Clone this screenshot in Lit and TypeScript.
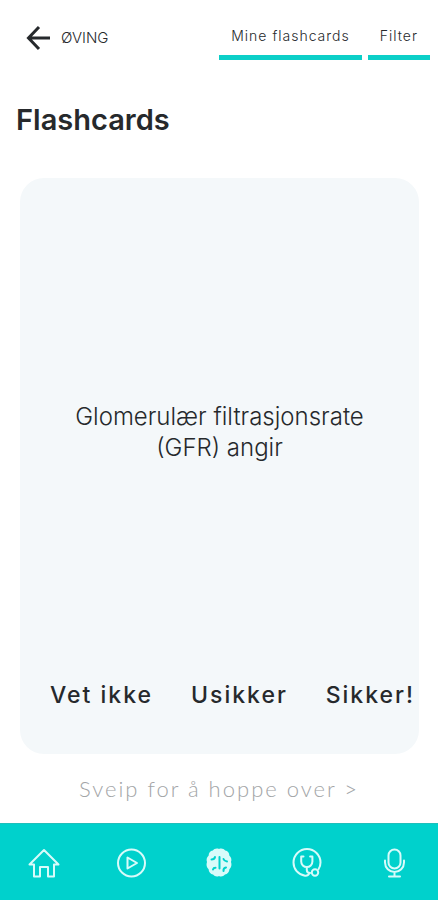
import { LitElement, html, css, svg } from "lit";
import { customElement, property } from "lit/decorators.js";

const icons: Record<string, unknown> = {
  home: svg`<path d="M1.500 17.500 16 3 30.500 17.500h-4.500v12h-6v-9.500h-8v9.500H6v-12z"/>`,
  play: svg`<circle cx="16.500" cy="16" r="13.500"/><path d="M12.500 10.500v11l9.500-5.500z"/>`,
  brain: svg`<path fill="currentColor" stroke="none" d="M16 2c2-1 5-.4 6.200 1.500 2.600.4 4.300 2.600 4.100 5 2 1.600 2.600 4.300 1.700 6.500 1 2.700.4 5.600-1.600 7.200-.1 2.700-2 5.100-4.400 5.400-1.500 1.900-4.200 2.500-6 1.400-1.800 1.100-4.500.5-6-1.400-2.400-.3-4.300-2.700-4.400-5.400-2-1.600-2.600-4.500-1.600-7.200-.9-2.200-.3-4.900 1.700-6.500-.2-2.400 1.500-4.600 4.100-5C11 1.600 14 1 16 2z"/>
    <path class="groove" d="M16.500 10v11.500M8.500 12.500c1.800 0 3.200-1 3.500-2.500M20.500 12c.5 1.500 1.700 2.300 3.500 2.500M10 22.500c.3-1.200 1.200-1.700 2.500-1.700M20.500 24c-.2-2 .8-3.200 2.500-3.500"/>`,
  stethoscope: svg`<path d="M18.500 26c-1 1.900-2.700 3-4.500 2.700C7 27.600 2.500 22 2.500 15.500A13.500 13.500 0 0 1 29.500 15.500c0 2.700-.7 4.800-2 6.700"/>
    <path d="M12.500 9.500h-2.300v5a5.600 5.600 0 0 0 11.200 0v-5h-2.300M15.800 20v3c0 2 1 3 3.200 3"/><circle cx="24" cy="25.500" r="3.200"/>`,
  mic: svg`<rect x="10.500" y="2.500" width="12" height="19" rx="6"/><path d="M7 13.500v2a9.500 9.500 0 0 0 19 0v-2M16.500 25v4M11 29.500h11"/>`,
};

@customElement("nav-icon")
class NavIcon extends LitElement {
  @property() name = "home";
  static styles = css`
    :host { display: block; width: 32px; height: 32px; }
    svg { display: block; width: 100%; height: 100%; fill: none; stroke: currentColor;
      stroke-width: 2; stroke-linejoin: round; stroke-linecap: round; }
    .groove { stroke: #00d1cc; stroke-width: 2; }
  `;
  render() {
    return html`<svg viewBox="0 0 32 32" aria-hidden="true">${icons[this.name]}</svg>`;
  }
}

@customElement("app-root")
class AppRoot extends LitElement {
  static styles = css`
    :host { display: flex; flex-direction: column; min-height: 100vh; background: #fff;
      color: #26292c; font-family: Lato, "Open Sans", sans-serif; }
    * { box-sizing: border-box; }
    a { color: inherit; text-decoration: none; }
    button { border: 0; padding: 0; background: none; color: inherit; font: inherit; cursor: pointer; }
    header { display: flex; justify-content: space-between; align-items: flex-start; padding: 16px 8px 0 26px; }
    .back { display: flex; align-items: center; gap: 10px; height: 44px; font: 300 15px/20px Inter, sans-serif; }
    .arrow { width: 25px; height: 26px; fill: none; stroke: #26292c; stroke-width: 3; }
    .tabs { display: flex; gap: 6px; }
    .tab { height: 44px; padding: 0 12px; border-bottom: 5px solid #0ccfc8;
      font: 300 14px/20px Inter, sans-serif; letter-spacing: 1px; white-space: nowrap; }
    h1 { margin: 0; padding: 42px 16px 0; font: 600 29px/36px Inter, sans-serif; }
    main { flex: 1; display: flex; flex-direction: column; }
    .card { flex: 1; display: flex; flex-direction: column; margin: 40px 19px 0 20px;
      border-radius: 24px; background: #f4f8fa; }
    .question { flex: 1; display: flex; align-items: center; justify-content: center; margin: 0;
      padding: 6px 40px 0; text-align: center; font: 300 24px/31px Inter, sans-serif; }
    .answers { display: flex; justify-content: space-between; padding: 0 4px 44px 30px; }
    .answer { font: 500 23px/30px Inter, sans-serif; letter-spacing: 2px; white-space: nowrap; }
    .skip { align-self: center; margin: 20px 0 19px; color: #a3a5a7; font-weight: 300;
      font-size: 22px; line-height: 30px; letter-spacing: 2px; }
    nav { display: grid; grid-template-columns: repeat(5, 1fr); height: 77px; background: #00d1cc;
      border-top: 1px solid #1fbfbb; color: #d8fbfa; padding-top: 2px; }
    .item { display: grid; place-items: center; }
  `;

  render() {
    return html`
      <header>
        <a class="back" href="#oving">
          <svg class="arrow" viewBox="0 0 25 26" aria-hidden="true"><path d="M13 2 2.500 13 13 24M2.500 13H24" /></svg>
          <span>ØVING</span>
        </a>
        <div class="tabs">
          <button class="tab">Mine flashcards</button>
          <button class="tab">Filter</button>
        </div>
      </header>
      <main>
        <h1>Flashcards</h1>
        <section class="card">
          <p class="question">Glomerulær filtrasjonsrate (GFR) angir</p>
          <div class="answers">
            ${["Vet ikke", "Usikker", "Sikker!"].map((t) => html`<button class="answer">${t}</button>`)}
          </div>
        </section>
        <button class="skip">Sveip for å hoppe over &gt;</button>
      </main>
      <nav>
        ${[
          ["home", "Hjem"],
          ["play", "Video"],
          ["brain", "Øving"],
          ["stethoscope", "Klinikk"],
          ["mic", "Podkast"],
        ].map(([n, label]) => html`<a class="item" href="#${n}" aria-label=${label}><nav-icon name=${n}></nav-icon></a>`)}
      </nav>
    `;
  }
}
